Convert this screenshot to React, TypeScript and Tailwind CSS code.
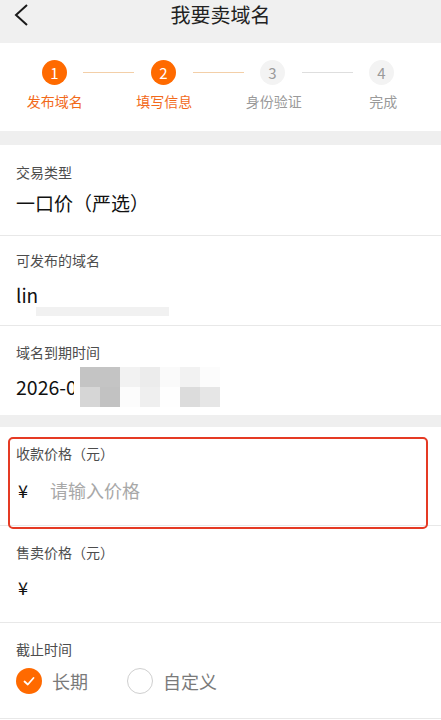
import React from "react";

const font = { fontFamily: '"Noto Sans CJK SC", "Noto Sans", sans-serif' };

function Step({ n, active }: { n: number; active: boolean }) {
  return (
    <div
      className={
        "w-[25px] h-[25px] rounded-full flex items-center justify-center text-[15px] leading-none shrink-0 " +
        (active ? "bg-[#ff6a00] text-white" : "bg-[#f3f3f3] text-[#9a9a9a]")
      }
    >
      {n}
    </div>
  );
}

export default function App() {
  return (
    <div className="w-[441px] h-[720px] overflow-hidden bg-white" style={font}>
      {/* header */}
      <div className="h-[43px] bg-[#f0f0f0] relative flex justify-center pt-[2px]">
        <svg className="absolute left-[12px] top-[3px]" width="20" height="24" viewBox="0 0 20 24">
          <polyline points="15,2 4,12 15,22" fill="none" stroke="#1a1a1a" strokeWidth="2" />
        </svg>
        <div className="text-[20px] leading-[26px] text-[#222]">我要卖域名</div>
      </div>

      {/* steps */}
      <div className="h-[88px] pt-[17px]">
        <div className="flex items-center pl-[42px]">
          <Step n={1} active />
          <div className="ml-[16px] mr-[17px] w-[51px] h-px bg-[#f3cfa8]" />
          <Step n={2} active />
          <div className="ml-[17px] mr-[16px] w-[51px] h-px bg-[#f3cfa8]" />
          <Step n={3} active={false} />
          <div className="ml-[17px] mr-[16px] w-[51px] h-px bg-[#dedede]" />
          <Step n={4} active={false} />
        </div>
        <div className="grid grid-cols-4 w-[438px] mt-[6px] text-[14px] leading-[20px] text-center">
          <div className="text-[#f26a1b]">发布域名</div>
          <div className="text-[#f26a1b]">填写信息</div>
          <div className="text-[#9a9a9a]">身份验证</div>
          <div className="text-[#9a9a9a]">完成</div>
        </div>
      </div>

      <div className="h-[14px] bg-[#efefef]" />

      {/* row 1 */}
      <div className="h-[91px] border-b border-[#e8e8e8] pl-[16px] pt-[17px]">
        <div className="text-[14px] leading-[20px] text-[#4d4d4d]">交易类型</div>
        <div className="mt-[7px] text-[19px] leading-[28px] text-[#111]">一口价（严选）</div>
      </div>

      {/* row 2 */}
      <div className="h-[90px] border-b border-[#e8e8e8] pl-[16px] pt-[14px]">
        <div className="text-[14px] leading-[20px] text-[#4d4d4d]">可发布的域名</div>
        <div className="mt-[11px] text-[19px] leading-[28px] text-[#111]">lin</div>
        <div className="ml-[20px] -mt-[2px] w-[133px] h-[9px] bg-[#f1f1f1]" />
      </div>

      {/* row 3 */}
      <div className="h-[89px] pl-[16px] pt-[16px]">
        <div className="text-[14px] leading-[20px] text-[#4d4d4d]">域名到期时间</div>
        <div className="mt-[5px] flex items-center">
          <div className="text-[19.5px] leading-[28px] text-[#111] w-[58px] overflow-hidden whitespace-nowrap">2026-0</div>
          <div className="ml-[6px] grid grid-cols-7 w-[140px] h-[40px]">
            <div className="bg-[#c4c4c4]" />
            <div className="bg-[#c4c4c4]" />
            <div className="bg-[#f2f2f2]" />
            <div className="bg-[#ececec]" />
            <div className="bg-[#fafafa]" />
            <div className="bg-[#f2f2f2]" />
            <div className="bg-[#fcfcfc]" />
            <div className="bg-[#d6d6d6]" />
            <div className="bg-[#c2c2c2]" />
            <div className="bg-[#fcfcfc]" />
            <div className="bg-[#efefef]" />
            <div className="bg-[#fefefe]" />
            <div className="bg-[#dcdcdc]" />
            <div className="bg-[#e6e6e6]" />
          </div>
        </div>
      </div>

      <div className="h-[12px] bg-[#efefef]" />

      {/* row 4 */}
      <div className="relative h-[99px] border-b border-[#e8e8e8] pl-[16px] pt-[16px]">
        <div className="text-[14px] leading-[20px] text-[#4d4d4d]">收款价格（元）</div>
        <div className="mt-[13px] flex items-center">
          <span className="text-[18px] leading-[28px] text-[#111] w-[34px] pl-[2px]">¥</span>
          <span className="text-[18px] leading-[28px] text-[#a8a8a8]">请输入价格</span>
        </div>
        <div className="absolute left-[8px] top-[10px] w-[420px] h-[92px] border-2 border-[#e53a24] rounded-[5px]" />
      </div>

      {/* row 5 */}
      <div className="h-[97px] border-b border-[#e8e8e8] pl-[16px] pt-[16px]">
        <div className="text-[14px] leading-[20px] text-[#4d4d4d]">售卖价格（元）</div>
        <div className="mt-[11px] flex items-center">
          <span className="text-[18px] leading-[28px] text-[#111] pl-[2px]">¥</span>
        </div>
      </div>

      {/* row 6 */}
      <div className="h-[96px] border-b border-[#e8e8e8] pl-[16px] pt-[16px]">
        <div className="text-[14px] leading-[20px] text-[#4d4d4d]">截止时间</div>
        <div className="mt-[8px] flex items-center">
          <div className="w-[26px] h-[26px] rounded-full bg-[#ff6a00] flex items-center justify-center">
            <svg width="14" height="14" viewBox="0 0 14 14">
              <polyline points="2.5,7.5 5.8,10.5 11.5,4" fill="none" stroke="#fff" strokeWidth="1.8" strokeLinecap="round" strokeLinejoin="round" />
            </svg>
          </div>
          <span className="ml-[10px] text-[18px] leading-[28px] text-[#7a7a7a]">长期</span>
          <div className="ml-[39px] w-[26px] h-[26px] rounded-full border-[1.5px] border-[#cfcfcf]" />
          <span className="ml-[10px] text-[18px] leading-[28px] text-[#7a7a7a]">自定义</span>
        </div>
      </div>
    </div>
  );
}
